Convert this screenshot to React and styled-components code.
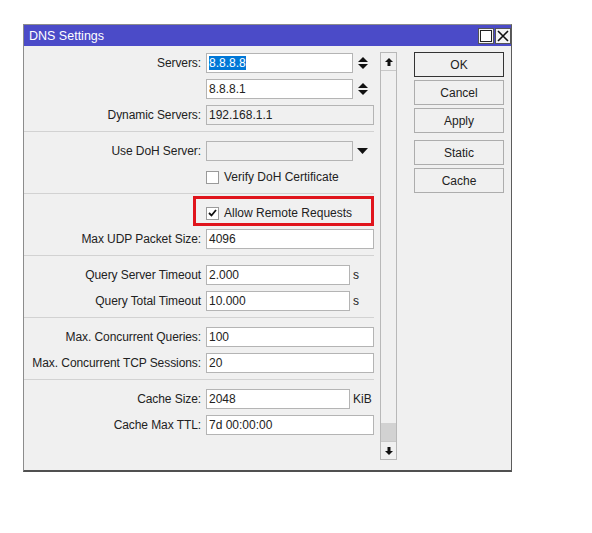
import React from 'react';
import styled, { createGlobalStyle } from 'styled-components';

// global page reset
const GlobalStyle = createGlobalStyle`
  body {
    margin: 0;
    background: #ffffff;
    font-family: "Liberation Sans", Arial, sans-serif;
    font-size: 12px;
    color: #222;
  }
`;

const Page = styled.div`
  padding: 24px 0 0 23px;
`;

const Window = styled.div`
  width: 487px;
  border: 1px solid #8c8c8c;
  border-right-color: #5c5c5c;
  border-bottom: 2px solid #505050;
  background: #f0f0f0;
`;

const TitleBar = styled.div`
  height: 21px;
  background: #4b4bc8;
  color: #fff;
  display: flex;
  align-items: center;
  justify-content: space-between;
  padding: 0 0 0 5px;
  font-size: 12.5px;
`;

const TitleButtons = styled.div`
  display: flex;
  align-items: center;
  gap: 1px;
`;

const TitleButton = styled.div`
  width: 16px;
  height: 16px;
  box-sizing: border-box;
  background: #f4f4f4;
  border: 1px solid #555;
  display: flex;
  align-items: center;
  justify-content: center;
`;

const Body = styled.div`
  display: flex;
  height: 424px;
`;

const Form = styled.div`
  width: 356px;
  padding: 4px 6px 0 0;
  box-sizing: border-box;
`;

const Row = styled.div`
  display: grid;
  grid-template-columns: 182px 168px;
  height: 26px;
  align-items: ${(p) => (p.$center ? 'center' : 'start')};
  padding-top: ${(p) => (p.$center ? '0' : '3px')};
  box-sizing: border-box;
`;

const Label = styled.div`
  text-align: right;
  padding-right: 5px;
  line-height: 20px;
  white-space: nowrap;
  letter-spacing: -0.08px;
`;

const Field = styled.div`
  display: flex;
  align-items: center;
  position: relative;
`;

const Input = styled.div`
  width: ${(p) => p.$w || 168}px;
  height: 20px;
  box-sizing: border-box;
  border: 1px solid #b4b4b4;
  background: ${(p) => (p.$readonly ? '#f0f0f0' : '#fff')};
  padding: 0 2px;
  line-height: 18px;
  white-space: nowrap;
  overflow: hidden;
`;

const Selected = styled.span`
  background: #0078d7;
  color: #fff;
`;

const Addon = styled.div`
  width: ${(p) => 168 - p.$w}px;
  display: flex;
  justify-content: ${(p) => (p.$unit ? 'flex-start' : 'center')};
  padding-left: ${(p) => (p.$unit ? '3px' : '0')};
  padding-right: ${(p) => (p.$unit ? '0' : '2px')};
  box-sizing: border-box;
  align-items: center;
  line-height: 20px;
`;

const Check = styled.div`
  width: 13px;
  height: 13px;
  box-sizing: border-box;
  border: 1px solid #9a9a9a;
  background: #fff;
  display: flex;
  align-items: center;
  justify-content: center;
  margin-right: 5px;
`;

const Highlight = styled.div`
  position: absolute;
  left: -13px;
  top: -10px;
  width: 181px;
  height: 30px;
  box-sizing: border-box;
  border: 3px solid #e0141c;
  pointer-events: none;
`;

const Separator = styled.div`
  height: 1px;
  background: #d2d2d2;
  margin: 3px 0 6px;
`;

const ScrollBar = styled.div`
  width: 17px;
  margin: 6px 0 10px;
  border: 1px solid #b8b8b8;
  box-sizing: border-box;
  display: flex;
  flex-direction: column;
  background: #f0f0f0;
`;

const ScrollArrow = styled.div`
  height: 18px;
  display: flex;
  align-items: center;
  justify-content: center;
  border-${(p) => (p.$down ? 'top' : 'bottom')}: 1px solid #c8c8c8;
  box-sizing: border-box;
`;

const Track = styled.div`
  flex: 1;
  display: flex;
  flex-direction: column;
  justify-content: flex-end;
`;

const Thumb = styled.div`
  height: 18px;
  background: #d2d2d2;
`;

const Side = styled.div`
  flex: 1;
  padding: 6px 0 0 17px;
  display: flex;
  flex-direction: column;
  gap: 3px;
`;

const Button = styled.div`
  width: 90px;
  height: 25px;
  box-sizing: border-box;
  border: 1px solid ${(p) => (p.$primary ? '#333' : '#adadad')};
  background: #f0f0f0;
  display: flex;
  align-items: center;
  justify-content: center;
  margin-top: ${(p) => (p.$gapTop ? '4px' : '0')};
`;

const Spinner = () => (
  <svg width="10" height="14" viewBox="0 0 10 14">
    <polygon points="0,6 5,1 10,6" fill="#111" />
    <polygon points="0,8 5,13 10,8" fill="#111" />
  </svg>
);

const DropArrow = () => (
  <svg width="11" height="6" viewBox="0 0 11 6">
    <polygon points="0,0 11,0 5.5,6" fill="#111" />
  </svg>
);

const CheckMark = () => (
  <svg width="9" height="8" viewBox="0 0 9 8">
    <polyline points="1,4 3.5,6.5 8,1" fill="none" stroke="#111" strokeWidth="1.8" />
  </svg>
);

const ArrowIcon = ({ down }) => (
  <svg width="8" height="8" viewBox="0 0 8 8" style={down ? { transform: 'rotate(180deg)' } : undefined}>
    <polygon points="4,0 8,4 5.5,4 5.5,8 2.5,8 2.5,4 0,4" fill="#111" />
  </svg>
);

// text field row, optional spinner / dropdown / unit after the box
const FieldRow = ({ label, value, width = 168, readonly, addon, unit }) => (
  <Row>
    <Label>{label}</Label>
    <Field>
      <Input $w={width} $readonly={readonly}>{value}</Input>
      {width < 168 && (
        <Addon $w={width} $unit={!!unit}>
          {unit || addon}
        </Addon>
      )}
    </Field>
  </Row>
);

const CheckRow = ({ label, checked, highlight }) => (
  <Row $center>
    <Label />
    <Field>
      {highlight && <Highlight />}
      <Check>{checked && <CheckMark />}</Check>
      <span>{label}</span>
    </Field>
  </Row>
);

export default function App() {
  return (
    <>
      <GlobalStyle />
      <Page>
        <Window>
          <TitleBar>
            <span>DNS Settings</span>
            <TitleButtons>
              <TitleButton>
                <svg width="12" height="12" viewBox="0 0 12 12">
                  <rect x="0.5" y="0.5" width="11" height="11" fill="#fff" stroke="#222" />
                </svg>
              </TitleButton>
              <TitleButton>
                <svg width="12" height="12" viewBox="0 0 12 12">
                  <path d="M1 1 L11 11 M11 1 L1 11" stroke="#111" strokeWidth="1.6" />
                </svg>
              </TitleButton>
            </TitleButtons>
          </TitleBar>
          <Body>
            <Form>
              <FieldRow label="Servers:" value={<Selected>8.8.8.8</Selected>} width={147} addon={<Spinner />} />
              <FieldRow label="" value="8.8.8.1" width={147} addon={<Spinner />} />
              <FieldRow label="Dynamic Servers:" value="192.168.1.1" readonly />
              <Separator />
              <FieldRow label="Use DoH Server:" value="" width={147} readonly addon={<DropArrow />} />
              <CheckRow label="Verify DoH Certificate" />
              <Separator />
              <CheckRow label="Allow Remote Requests" checked highlight />
              <FieldRow label="Max UDP Packet Size:" value="4096" />
              <Separator />
              <FieldRow label="Query Server Timeout" value="2.000" width={144} unit="s" />
              <FieldRow label="Query Total Timeout" value="10.000" width={144} unit="s" />
              <Separator />
              <FieldRow label="Max. Concurrent Queries:" value="100" />
              <FieldRow label="Max. Concurrent TCP Sessions:" value="20" />
              <Separator />
              <FieldRow label="Cache Size:" value="2048" width={144} unit="KiB" />
              <FieldRow label="Cache Max TTL:" value="7d 00:00:00" />
            </Form>
            <ScrollBar>
              <ScrollArrow>
                <ArrowIcon />
              </ScrollArrow>
              <Track>
                <Thumb />
              </Track>
              <ScrollArrow $down>
                <ArrowIcon down />
              </ScrollArrow>
            </ScrollBar>
            <Side>
              <Button $primary>OK</Button>
              <Button>Cancel</Button>
              <Button>Apply</Button>
              <Button $gapTop>Static</Button>
              <Button>Cache</Button>
            </Side>
          </Body>
        </Window>
      </Page>
    </>
  );
}
